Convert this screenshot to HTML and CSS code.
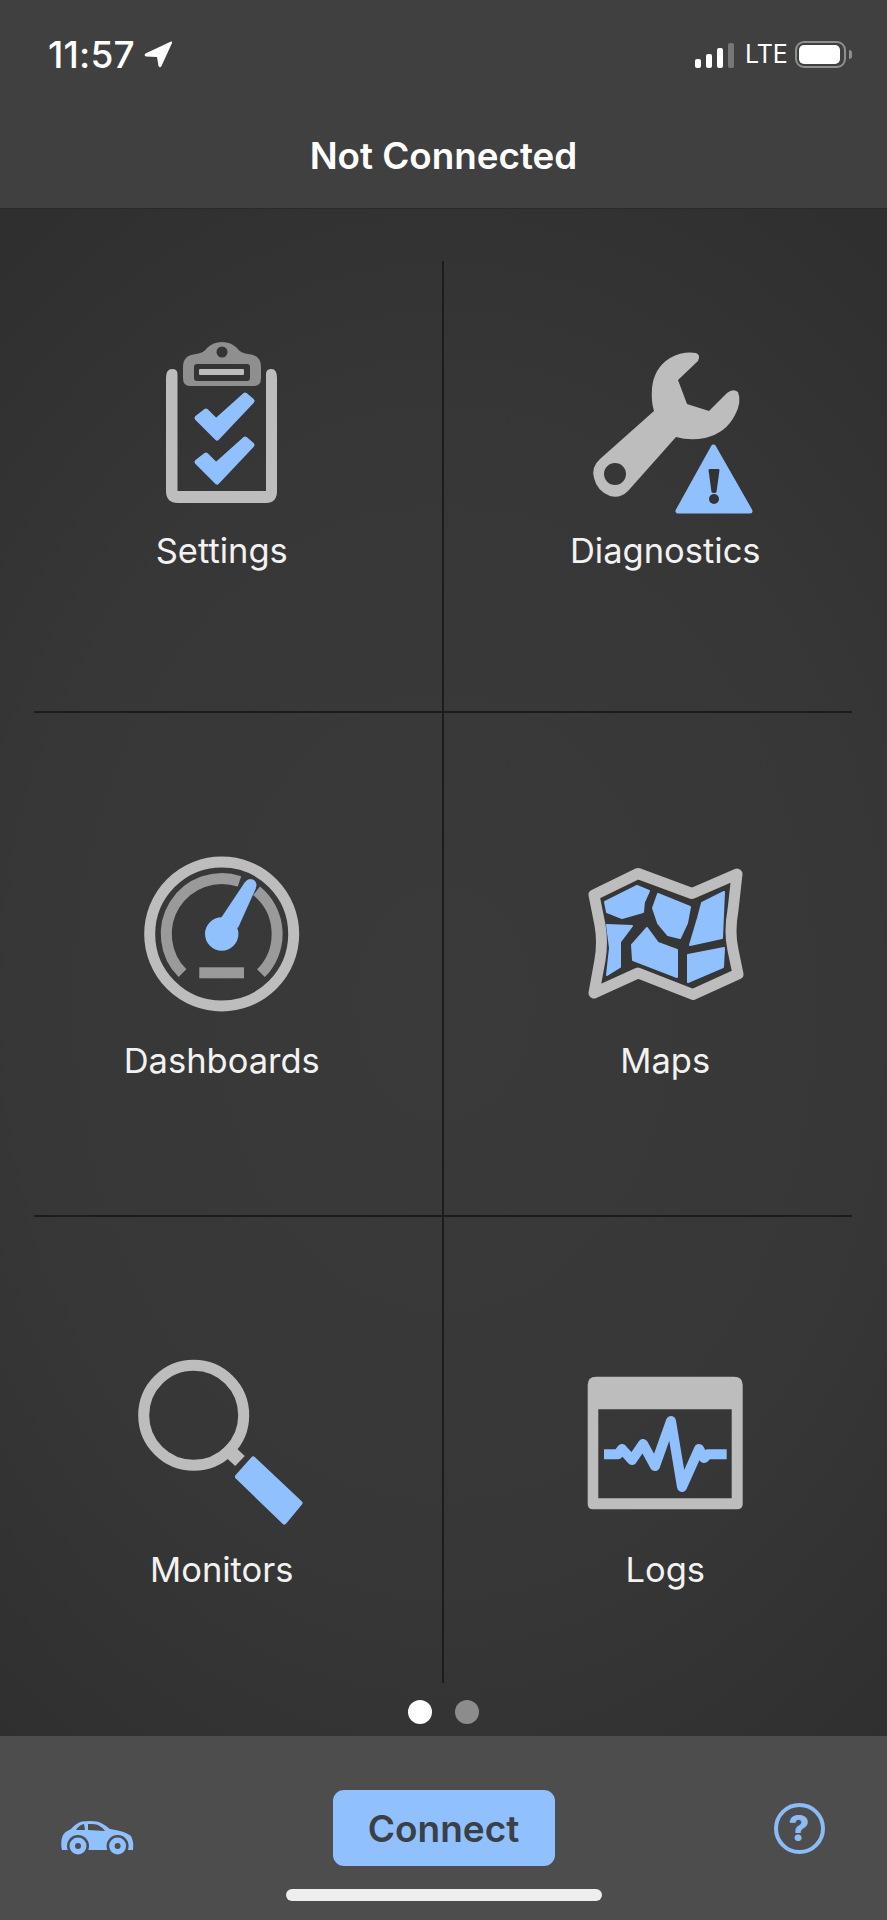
FILE: index.html
```html
<!DOCTYPE html>
<html lang="en">
<head>
<meta charset="utf-8">
<title>Not Connected</title>
<link rel="stylesheet" href="styles.css">
</head>
<body>
<div class="app">
  <header class="header">
    <div class="status">
      <div class="status-left">
        <span class="time">11:57</span>
        <svg class="arrow" viewBox="143 42 28 27"><path d="M170 42.500 L144.500 54.500 Q142.500 56.500 145 57.500 L156 58 L157.500 67 Q159 69.500 160.500 67 L171 44 Q171.500 42 170 42.500Z"/></svg>
      </div>
      <div class="status-right">
        <div class="signal">
          <span class="bar bar-1"></span><span class="bar bar-2"></span><span class="bar bar-3"></span><span class="bar bar-4"></span>
        </div>
        <span class="lte">LTE</span>
        <div class="battery"><span class="battery-fill"></span></div>
        <span class="battery-nub"></span>
      </div>
    </div>
    <h1 class="title">Not Connected</h1>
  </header>

  <main class="main">
    <div class="grid">
      <div class="row row-1">
        <div class="cell">
          <svg class="icon" viewBox="122 340 200 170">
            <path class="gray" d="M172 369 Q166 369 166 378 V491 Q166 503 178 503 H266 Q277 503 277 491 V378 Q277 369 271.500 369 Q266 369 266 374 V491 H177.500 V374 Q177.500 369 172 369Z"/>
            <path class="mid" fill-rule="evenodd" d="M190 386 Q183 386 183 378 V367 Q183 355 196 354 Q204 353 207 348 Q213 342 222 342 Q231 342 237 348 Q240 353 248 354 Q261 355 261 367 V378 Q261 386 254 386Z M227.500 352 A5.500 5.500 0 1 0 216.500 352 A5.500 5.500 0 1 0 227.500 352Z M197 364 Q194 364 194 367 V378 Q194 381 197 381 H247 Q250 381 250 378 V367 Q250 364 247 364Z"/>
            <rect class="gray" x="199" y="369" width="45" height="6" rx="1"/>
            <polygon class="blue round" points="197,418 206,411 216,421 245,395 252,401 217,438"/>
            <polygon class="blue round" points="197,462 206,455 216,465 245,439 252,445 217,482"/>
          </svg>
          <span class="label">Settings</span>
        </div>
        <div class="cell">
          <svg class="icon icon-tall" viewBox="565 340 200 180">
            <path class="gray" fill-rule="evenodd" d="M696 353 Q683 351 670 358 Q654 368 652 388 Q651 402 654 411 L600 459 Q591 467 594 478 Q597 491 610 496 Q620 499 628 491 L676 437 Q690 441 705 438 Q726 433 735 415 Q742 402 738 392 Q733 388 727 393 L709 411 L687 404 L678 380 L698 361 Q701 355 696 353Z M626 474 A11 11 0 1 0 604 474 A11 11 0 1 0 626 474Z"/>
            <polygon class="blue round" points="713.500,447 678,511 750,511"/>
            <path class="ink" d="M708.500 470 Q708.500 469 710 469 H718 Q719.500 469 719.500 470 L716.500 492 Q716 493 714 493 Q712 493 711.500 492Z"/>
            <circle class="ink" cx="714" cy="499" r="5"/>
          </svg>
          <span class="label">Diagnostics</span>
        </div>
      </div>
      <div class="row row-2">
        <div class="cell">
          <svg class="icon" viewBox="122 850 200 170">
            <circle class="ring" cx="221.700" cy="934" r="72"/>
            <path class="arc" d="M182.500 973.200 A55.500 55.500 0 0 1 239.500 881.400"/>
            <path class="arc" d="M256.500 890.800 A55.500 55.500 0 0 1 260.900 973.200"/>
            <rect class="arc-bar" x="199.300" y="967.300" width="44.700" height="11"/>
            <polygon class="blue" points="221,918 245,882 256,888 238,928"/>
            <circle class="blue" cx="250.500" cy="885" r="6"/>
            <circle class="blue" cx="221.700" cy="934" r="16.700"/>
          </svg>
          <span class="label">Dashboards</span>
        </div>
        <div class="cell">
          <svg class="icon" viewBox="565 850 200 170">
            <path class="map-edge" d="M594 895 L638 873.500 L692 893.500 L737 874 L733 910 Q729 932 733 950 L738 974 L693 994.500 L638 973 L594 993 L600 960 Q603 942 600 925Z"/>
            <polygon class="blue map-piece" points="605,902 637,886 649,891 644,902 643,912 622,918 607,912"/>
            <polygon class="blue map-piece" points="658,894 690,907 687,923 680,938 668,935 658,923 653,908"/>
            <polygon class="blue map-piece" points="702,903 724,892 722,938 690,945 698,918"/>
            <polygon class="blue map-piece" points="607,925 632,926 620,942 620,967 607,975 610,948"/>
            <polygon class="blue map-piece" points="647,928 658,943 677,950 677,977 633,960 632,945"/>
            <polygon class="blue map-piece" points="688,955 724,948 723,967 688,982"/>
          </svg>
          <span class="label">Maps</span>
        </div>
      </div>
      <div class="row row-3">
        <div class="cell">
          <svg class="icon" viewBox="122 1359 200 170">
            <circle class="ring" cx="193.700" cy="1415.300" r="50"/>
            <line class="neck" x1="225" y1="1447" x2="240" y2="1461"/>
            <polygon class="blue round-s" points="253.300,1459 300,1503 284.300,1522 237.500,1476.700"/>
          </svg>
          <span class="label">Monitors</span>
        </div>
        <div class="cell">
          <svg class="icon" viewBox="565 1359 200 170">
            <path class="gray" fill-rule="evenodd" d="M596 1376.700 H734 Q742.700 1376.700 742.700 1385 V1504 Q742.700 1509.300 737 1509.300 H593 Q587.700 1509.300 587.700 1504 V1385 Q587.700 1376.700 596 1376.700Z M598.300 1409.300 V1498.300 H731.700 V1409.300Z"/>
            <polyline class="wave" points="604,1454.300 618,1454.300 622,1449 632,1460 643,1444 655,1466 671,1421 682,1487 699,1449 704,1458 708,1454.300 726.700,1454.300"/>
          </svg>
          <span class="label">Logs</span>
        </div>
      </div>
    </div>
    <div class="dots"><span class="dot dot-on"></span><span class="dot"></span></div>
  </main>

  <footer class="footer">
    <svg class="car" viewBox="60 1819 74 37">
      <path class="blue" d="M62 1850 Q60 1842 63 1835 Q66 1831 71 1829 Q76 1823 82 1821.500 Q90 1820.500 97 1821.500 Q103 1823 110 1829 Q125 1831 131 1836 Q134 1842 133 1850Z"/>
      <path class="carbody" d="M76 1830 Q79 1825 84 1824 L85 1830Z M88 1824 Q94 1823.500 98 1825 Q102 1827 105 1831 L88 1830Z"/>
      <circle class="carbody" cx="78" cy="1846" r="11"/>
      <circle class="carbody" cx="117.600" cy="1846" r="11"/>
      <circle class="blue" cx="78" cy="1846" r="8.500"/>
      <circle class="blue" cx="117.600" cy="1846" r="8.500"/>
      <circle class="carbody" cx="78" cy="1846" r="3"/>
      <circle class="carbody" cx="117.600" cy="1846" r="3"/>
    </svg>
    <button class="connect" type="button">Connect</button>
    <div class="help">?</div>
    <div class="home"></div>
  </footer>
</div>
</body>
</html>
```
FILE: styles.css
```css
* { box-sizing: border-box; }
html, body { margin: 0; padding: 0; }
body {
  width: 887px;
  height: 1920px;
  overflow: hidden;
  background: #333;
  font-family: Inter, "Liberation Sans", sans-serif;
}
.app { display: flex; flex-direction: column; height: 1920px; }

.header {
  height: 209px;
  flex: none;
  padding-top: 41px;
  background: #404040;
  border-bottom: 1px solid #2a2a2a;
  color: #fff;
}
.status {
  display: flex;
  justify-content: space-between;
  align-items: center;
  height: 27px;
  padding: 0 35px 0 48px;
}
.status-left { display: flex; align-items: center; gap: 9px; }
.time { font-size: 37px; font-weight: 500; line-height: 27px; letter-spacing: 0.2px; }
.arrow { width: 28px; height: 27px; fill: #fff; }
.status-right { display: flex; align-items: center; }
.signal { display: flex; align-items: flex-end; gap: 5px; height: 26px; margin-right: 11px; }
.bar { width: 6px; border-radius: 2px; background: #fff; }
.bar-1 { height: 9px; }
.bar-2 { height: 14px; }
.bar-3 { height: 20px; }
.bar-4 { height: 25px; background: #777; }
.lte { font-size: 25px; font-weight: 400; line-height: 27px; width: 40px; margin-right: 10px; color: #fff; }
.battery {
  width: 51px;
  height: 27px;
  border: 2px solid #8f8f8f;
  border-radius: 9px;
  padding: 2px;
}
.battery-fill { display: block; height: 100%; width: 41px; background: #fff; border-radius: 5px; }
.battery-nub {
  width: 3px;
  height: 9px;
  margin-left: 3px;
  background: #8f8f8f;
  border-radius: 0 3px 3px 0;
}
.title {
  margin: 66px 0 0;
  text-align: center;
  font-size: 36.800px;
  font-weight: 600;
  line-height: 44px;
}

.main {
  flex: 1;
  padding-top: 52px;
  background: radial-gradient(ellipse 80% 62% at 50% 52%, #3a3a3a 0%, #373737 60%, #2f2f2f 100%);
}
.grid { position: relative; height: 1422px; }
.grid::after {
  content: "";
  position: absolute;
  left: 442px;
  top: 0;
  bottom: 0;
  width: 2px;
  background: #1c1c1c;
}
.row { display: grid; grid-template-columns: 1fr 1fr; position: relative; }
.row-1 { height: 451px; padding-top: 79px; }
.row-2 { height: 504px; padding-top: 138px; }
.row-3 { height: 467px; padding-top: 143px; }
.row-2::before, .row-3::before {
  content: "";
  position: absolute;
  left: 34px;
  right: 35px;
  top: -1px;
  height: 2px;
  background: #1c1c1c;
}
.cell { display: flex; flex-direction: column; align-items: center; }
.icon { width: 200px; height: 170px; display: block; }
.icon-tall { height: 180px; margin-bottom: -10px; }
.label {
  margin-top: 23px;
  font-size: 34.500px;
  line-height: 36px;
  color: #f2f2f2;
}

.gray { fill: #bdbdbd; }
.mid { fill: #8f8f8f; }
.arc-bar { fill: #9a9a9a; }
.blue { fill: #90c0fd; }
.ink { fill: #333; }
.round { stroke: #90c0fd; stroke-width: 5; stroke-linejoin: round; }
.round-s { stroke: #90c0fd; stroke-width: 5; stroke-linejoin: round; }
.map-edge { fill: #363636; stroke: #bdbdbd; stroke-width: 11; stroke-linejoin: round; }
.map-piece { stroke: #90c0fd; stroke-width: 2; stroke-linejoin: round; }
.ring { fill: none; stroke: #bdbdbd; stroke-width: 11; }
.arc { fill: none; stroke: #9a9a9a; stroke-width: 11; }
.neck { stroke: #bdbdbd; stroke-width: 14; }
.wave { fill: none; stroke: #90c0fd; stroke-width: 10; stroke-linejoin: round; }

.dots { display: flex; justify-content: center; gap: 23px; margin-top: 17px; }
.dot { width: 24px; height: 24px; border-radius: 50%; background: #8c8c8c; }
.dot-on { background: #fff; }

.footer {
  position: relative;
  flex: none;
  height: 184px;
  background: #4d4d4d;
  display: grid;
  grid-template-columns: 1fr auto 1fr;
  align-items: start;
  padding-top: 54px;
}
.car { width: 74px; height: 37px; margin: 29px 0 0 60px; display: block; }
.carbody { fill: #4d4d4d; }
.connect {
  width: 222px;
  height: 76px;
  padding: 0;
  border: 0;
  border-radius: 11px;
  background: #90c0fd;
  color: #3b3f46;
  font-family: inherit;
  font-size: 37px;
  font-weight: 600;
}
.help {
  width: 51px;
  height: 51px;
  margin: 13px 0 0 219px;
  border: 4px solid #8bbcf7;
  border-radius: 50%;
  color: #8bbcf7;
  font-size: 36px;
  font-weight: 800;
  line-height: 43px;
  text-align: center;
}
.home {
  position: absolute;
  left: 286px;
  top: 153px;
  width: 316px;
  height: 12px;
  border-radius: 6px;
  background: #eee;
}
```
